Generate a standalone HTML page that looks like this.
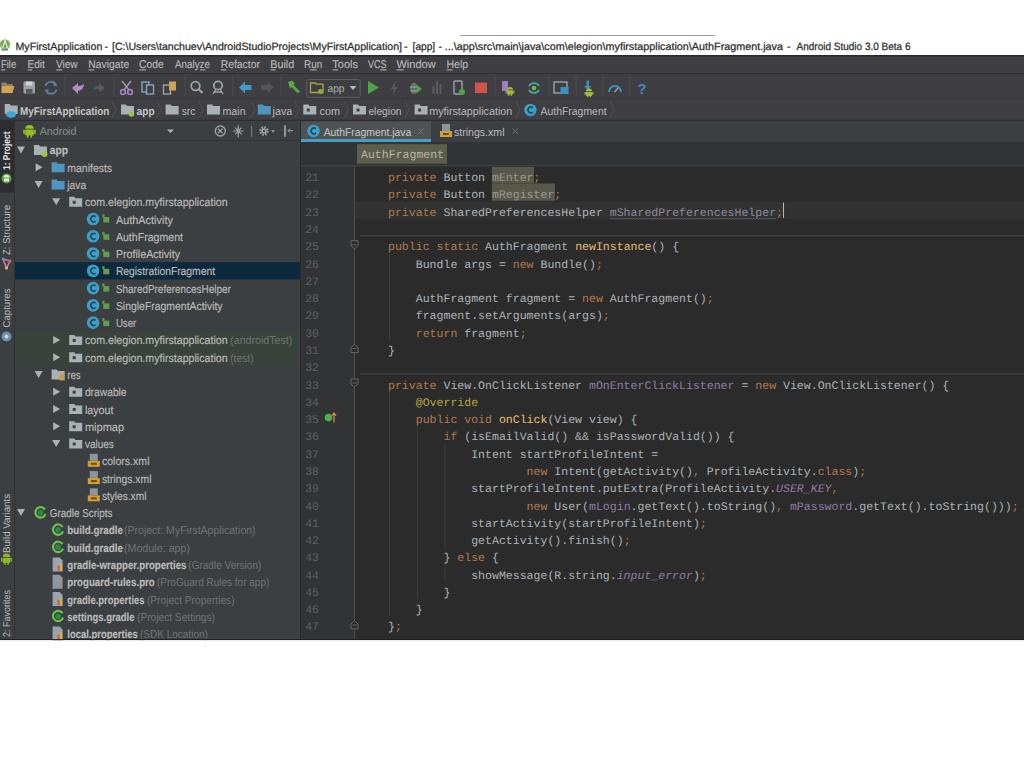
<!DOCTYPE html><html><head><meta charset="utf-8"><style>html,body{margin:0;padding:0;background:#fff;overflow:hidden}svg{display:block}</style></head><body>
<svg width="1024" height="767" viewBox="0 0 1024 767" text-rendering="geometricPrecision">
<rect x="0" y="0" width="1024" height="767" fill="#ffffff" />
<line x1="460" y1="35.5" x2="715" y2="35.5" stroke="#9a9a9a" stroke-width="1" />
<circle cx="5" cy="44.5" r="5.3" fill="#8cba6c"/>
<circle cx="5" cy="44" r="3.6" fill="#6d9e4c"/>
<path d="M2.5 48 L5 40.5 L7.5 48" stroke="#e4f0dc" stroke-width="1.3" fill="none"/>
<rect x="1.5" y="49" width="6.5" height="1.6" fill="#7a8a70"/>
<g stroke="#2e2e2e" stroke-width="0.25">
<text x="15.5" y="49.8" font-family="Liberation Sans" font-size="10.6" font-weight="400" fill="#2e2e2e" textLength="86.8" lengthAdjust="spacingAndGlyphs" >MyFirstApplication</text>
<text x="104.5" y="49.8" font-family="Liberation Sans" font-size="10.6" font-weight="400" fill="#2e2e2e" >-</text>
<text x="112.0" y="49.8" font-family="Liberation Sans" font-size="10.6" font-weight="400" fill="#2e2e2e" textLength="290.0" lengthAdjust="spacingAndGlyphs" >[C:\Users\tanchuev\AndroidStudioProjects\MyFirstApplication]</text>
<text x="404.0" y="49.8" font-family="Liberation Sans" font-size="10.6" font-weight="400" fill="#2e2e2e" >-</text>
<text x="412.6" y="49.8" font-family="Liberation Sans" font-size="10.6" font-weight="400" fill="#2e2e2e" textLength="22.6" lengthAdjust="spacingAndGlyphs" >[app]</text>
<text x="438.6" y="49.8" font-family="Liberation Sans" font-size="10.6" font-weight="400" fill="#2e2e2e" >-</text>
<text x="444.8" y="49.8" font-family="Liberation Sans" font-size="10.6" font-weight="400" fill="#2e2e2e" textLength="338.2" lengthAdjust="spacingAndGlyphs" >...\app\src\main\java\com\elegion\myfirstapplication\AuthFragment.java</text>
<text x="787.0" y="49.8" font-family="Liberation Sans" font-size="10.6" font-weight="400" fill="#2e2e2e" >-</text>
<text x="796.5" y="49.8" font-family="Liberation Sans" font-size="10.6" font-weight="400" fill="#2e2e2e" textLength="114.0" lengthAdjust="spacingAndGlyphs" >Android Studio 3.0 Beta 6</text>
</g>
<rect x="0" y="55" width="1024" height="585" fill="#3c3f41" />
<rect x="0" y="56" width="1024" height="65" fill="#3e3e43" />
<line x1="0" y1="55.7" x2="1024" y2="55.7" stroke="#2a2a2c" stroke-width="1.4" />
<text x="0.9" y="68.4" font-family="Liberation Sans" font-size="11.3" font-weight="400" fill="#bbbbbb" textLength="15.4" lengthAdjust="spacingAndGlyphs" stroke="#bbbbbb" stroke-width="0.12">File</text>
<text x="27.4" y="68.4" font-family="Liberation Sans" font-size="11.3" font-weight="400" fill="#bbbbbb" textLength="17.4" lengthAdjust="spacingAndGlyphs" stroke="#bbbbbb" stroke-width="0.12">Edit</text>
<text x="55.9" y="68.4" font-family="Liberation Sans" font-size="11.3" font-weight="400" fill="#bbbbbb" textLength="21.7" lengthAdjust="spacingAndGlyphs" stroke="#bbbbbb" stroke-width="0.12">View</text>
<text x="88.3" y="68.4" font-family="Liberation Sans" font-size="11.3" font-weight="400" fill="#bbbbbb" textLength="40.9" lengthAdjust="spacingAndGlyphs" stroke="#bbbbbb" stroke-width="0.12">Navigate</text>
<text x="139.1" y="68.4" font-family="Liberation Sans" font-size="11.3" font-weight="400" fill="#bbbbbb" textLength="24.8" lengthAdjust="spacingAndGlyphs" stroke="#bbbbbb" stroke-width="0.12">Code</text>
<text x="175.0" y="68.4" font-family="Liberation Sans" font-size="11.3" font-weight="400" fill="#bbbbbb" textLength="35.0" lengthAdjust="spacingAndGlyphs" stroke="#bbbbbb" stroke-width="0.12">Analyze</text>
<text x="220.7" y="68.4" font-family="Liberation Sans" font-size="11.3" font-weight="400" fill="#bbbbbb" textLength="39.2" lengthAdjust="spacingAndGlyphs" stroke="#bbbbbb" stroke-width="0.12">Refactor</text>
<text x="270.3" y="68.4" font-family="Liberation Sans" font-size="11.3" font-weight="400" fill="#bbbbbb" textLength="23.8" lengthAdjust="spacingAndGlyphs" stroke="#bbbbbb" stroke-width="0.12">Build</text>
<text x="304.1" y="68.4" font-family="Liberation Sans" font-size="11.3" font-weight="400" fill="#bbbbbb" textLength="18.2" lengthAdjust="spacingAndGlyphs" stroke="#bbbbbb" stroke-width="0.12">Run</text>
<text x="332.3" y="68.4" font-family="Liberation Sans" font-size="11.3" font-weight="400" fill="#bbbbbb" textLength="25.6" lengthAdjust="spacingAndGlyphs" stroke="#bbbbbb" stroke-width="0.12">Tools</text>
<text x="367.9" y="68.4" font-family="Liberation Sans" font-size="11.3" font-weight="400" fill="#bbbbbb" textLength="18.5" lengthAdjust="spacingAndGlyphs" stroke="#bbbbbb" stroke-width="0.12">VCS</text>
<text x="396.4" y="68.4" font-family="Liberation Sans" font-size="11.3" font-weight="400" fill="#bbbbbb" textLength="39.3" lengthAdjust="spacingAndGlyphs" stroke="#bbbbbb" stroke-width="0.12">Window</text>
<text x="446.4" y="68.4" font-family="Liberation Sans" font-size="11.3" font-weight="400" fill="#bbbbbb" textLength="21.7" lengthAdjust="spacingAndGlyphs" stroke="#bbbbbb" stroke-width="0.12">Help</text>
<line x1="1.2" y1="69.9" x2="5.2700000000000005" y2="69.9" stroke="#b0b0b0" stroke-width="1.1" />
<line x1="27.7" y1="69.9" x2="32.32" y2="69.9" stroke="#b0b0b0" stroke-width="1.1" />
<line x1="56.2" y1="69.9" x2="62.002500000000005" y2="69.9" stroke="#b0b0b0" stroke-width="1.1" />
<line x1="88.6" y1="69.9" x2="94.14125" y2="69.9" stroke="#b0b0b0" stroke-width="1.1" />
<line x1="139.4" y1="69.9" x2="146.055" y2="69.9" stroke="#b0b0b0" stroke-width="1.1" />
<line x1="199.87142857142857" y1="69.9" x2="205.27714285714285" y2="69.9" stroke="#b0b0b0" stroke-width="1.1" />
<line x1="221.0" y1="69.9" x2="226.3075" y2="69.9" stroke="#b0b0b0" stroke-width="1.1" />
<line x1="270.6" y1="69.9" x2="275.704" y2="69.9" stroke="#b0b0b0" stroke-width="1.1" />
<line x1="310.26666666666665" y1="69.9" x2="316.71999999999997" y2="69.9" stroke="#b0b0b0" stroke-width="1.1" />
<line x1="332.6" y1="69.9" x2="338.1" y2="69.9" stroke="#b0b0b0" stroke-width="1.1" />
<line x1="380.1333333333333" y1="69.9" x2="386.69666666666666" y2="69.9" stroke="#b0b0b0" stroke-width="1.1" />
<line x1="396.7" y1="69.9" x2="403.79499999999996" y2="69.9" stroke="#b0b0b0" stroke-width="1.1" />
<line x1="446.7" y1="69.9" x2="452.5025" y2="69.9" stroke="#b0b0b0" stroke-width="1.1" />
<line x1="0" y1="73.6" x2="1024" y2="73.6" stroke="#323236" stroke-width="1" />
<line x1="65" y1="77" x2="65" y2="96" stroke="#4a4d4f" stroke-width="1" />
<line x1="114" y1="77" x2="114" y2="96" stroke="#4a4d4f" stroke-width="1" />
<line x1="185" y1="77" x2="185" y2="96" stroke="#4a4d4f" stroke-width="1" />
<line x1="232.7" y1="77" x2="232.7" y2="96" stroke="#4a4d4f" stroke-width="1" />
<line x1="281" y1="77" x2="281" y2="96" stroke="#4a4d4f" stroke-width="1" />
<line x1="495" y1="77" x2="495" y2="96" stroke="#4a4d4f" stroke-width="1" />
<line x1="549" y1="77" x2="549" y2="96" stroke="#4a4d4f" stroke-width="1" />
<line x1="576" y1="77" x2="576" y2="96" stroke="#4a4d4f" stroke-width="1" />
<line x1="603" y1="77" x2="603" y2="96" stroke="#4a4d4f" stroke-width="1" />
<line x1="629.8" y1="77" x2="629.8" y2="96" stroke="#4a4d4f" stroke-width="1" />
<line x1="0" y1="98.3" x2="1024" y2="98.3" stroke="#3a3a3f" stroke-width="1" />
<line x1="0" y1="120.3" x2="1024" y2="120.3" stroke="#2e2e31" stroke-width="1.2" />
<rect x="0" y="121" width="14" height="519" fill="#3c3f41" />
<rect x="0" y="121" width="14" height="71.5" fill="#2b2d30" />
<line x1="14.5" y1="121" x2="14.5" y2="640" stroke="#2f3133" stroke-width="1" />
<rect x="15" y="121" width="285" height="519" fill="#3c3f41" />
<line x1="15" y1="140.5" x2="300" y2="140.5" stroke="#323436" stroke-width="1" />
<line x1="300.5" y1="121" x2="300.5" y2="640" stroke="#2b2b2b" stroke-width="1" />
<rect x="301" y="121" width="723" height="22" fill="#3c3f41" />
<rect x="301" y="121.5" width="130" height="21" fill="#4e5254" />
<rect x="301" y="139" width="130" height="3" fill="#4a9cc0" />
<rect x="301" y="142.2" width="723" height="23.8" fill="#313436" />
<line x1="301" y1="166.0" x2="1024" y2="166.0" stroke="#4a4b4d" stroke-width="1.1" />
<rect x="301" y="166.4" width="54" height="473.6" fill="#313335" />
<rect x="355" y="166.4" width="669" height="473.6" fill="#2b2b2b" />
<line x1="354.5" y1="166.4" x2="354.5" y2="640" stroke="#4a4c4e" stroke-width="1" />
<g>
<path d="M17.0 146.435 h8 l-4 7 z" fill="#aeb1b3"/>
<path d="M34.0 144.935 h5 l1.2 1.5 h6.8 v8.5 h-13 z" fill="#a9b1b4"/>
<circle cx="44.5" cy="153.935" r="3" fill="#9cc34e"/>
<text x="49.7" y="154.4" font-family="Liberation Sans" font-size="11.5" font-weight="700" fill="#bbbbbb" textLength="18.4" lengthAdjust="spacingAndGlyphs" stroke="#bbbbbb" stroke-width="0.15">app</text>
<path d="M35.6 163.205 v8 l7 -4 z" fill="#aeb1b3"/>
<path d="M51.6 162.205 h5 l1.2 1.5 h6.8 v8.5 h-13 z" fill="#4e96c0"/>
<text x="67.3" y="171.7" font-family="Liberation Sans" font-size="11.5" font-weight="400" fill="#bbbbbb" textLength="44.8" lengthAdjust="spacingAndGlyphs" stroke="#bbbbbb" stroke-width="0.15">manifests</text>
<path d="M34.6 180.975 h8 l-4 7 z" fill="#aeb1b3"/>
<path d="M51.6 179.475 h5 l1.2 1.5 h6.8 v8.5 h-13 z" fill="#4e96c0"/>
<text x="67.3" y="189.0" font-family="Liberation Sans" font-size="11.5" font-weight="400" fill="#bbbbbb" textLength="18.9" lengthAdjust="spacingAndGlyphs" stroke="#bbbbbb" stroke-width="0.15">java</text>
<path d="M52.2 198.245 h8 l-4 7 z" fill="#aeb1b3"/>
<path d="M69.2 196.745 h5 l1.2 1.5 h6.8 v8.5 h-13 z" fill="#a9b1b4"/>
<rect x="72.7" y="200.745" width="3" height="3" fill="#3c3f41"/>
<text x="84.9" y="206.2" font-family="Liberation Sans" font-size="11.5" font-weight="400" fill="#bbbbbb" textLength="142.8" lengthAdjust="spacingAndGlyphs" stroke="#bbbbbb" stroke-width="0.15">com.elegion.myfirstapplication</text>
<circle cx="93.10000000000001" cy="219.015" r="6.3" fill="#3d9fc5"/>
<path d="M95.60000000000001 216.815 A2.9 2.9 0 1 0 95.60000000000001 221.21499999999997" stroke="#1d4a5e" stroke-width="1.6" fill="none"/>
<rect x="103.30000000000001" y="217.015" width="6" height="5.5" fill="#5f9e4d"/>
<rect x="102.30000000000001" y="214.515" width="2.2" height="3" fill="#5f9e4d"/>
<text x="115.9" y="223.5" font-family="Liberation Sans" font-size="11.5" font-weight="400" fill="#bbbbbb" textLength="57.0" lengthAdjust="spacingAndGlyphs" stroke="#bbbbbb" stroke-width="0.15">AuthActivity</text>
<circle cx="93.10000000000001" cy="236.285" r="6.3" fill="#3d9fc5"/>
<path d="M95.60000000000001 234.085 A2.9 2.9 0 1 0 95.60000000000001 238.48499999999999" stroke="#1d4a5e" stroke-width="1.6" fill="none"/>
<rect x="103.30000000000001" y="234.285" width="6" height="5.5" fill="#5f9e4d"/>
<rect x="102.30000000000001" y="231.785" width="2.2" height="3" fill="#5f9e4d"/>
<text x="115.9" y="240.8" font-family="Liberation Sans" font-size="11.5" font-weight="400" fill="#bbbbbb" textLength="67.1" lengthAdjust="spacingAndGlyphs" stroke="#bbbbbb" stroke-width="0.15">AuthFragment</text>
<circle cx="93.10000000000001" cy="253.555" r="6.3" fill="#3d9fc5"/>
<path d="M95.60000000000001 251.35500000000002 A2.9 2.9 0 1 0 95.60000000000001 255.755" stroke="#1d4a5e" stroke-width="1.6" fill="none"/>
<rect x="103.30000000000001" y="251.555" width="6" height="5.5" fill="#5f9e4d"/>
<rect x="102.30000000000001" y="249.055" width="2.2" height="3" fill="#5f9e4d"/>
<text x="115.9" y="258.1" font-family="Liberation Sans" font-size="11.5" font-weight="400" fill="#bbbbbb" textLength="64.1" lengthAdjust="spacingAndGlyphs" stroke="#bbbbbb" stroke-width="0.15">ProfileActivity</text>
<rect x="15" y="262.19" width="285" height="17.27" fill="#0d293e" />
<circle cx="93.10000000000001" cy="270.825" r="6.3" fill="#3d9fc5"/>
<path d="M95.60000000000001 268.625 A2.9 2.9 0 1 0 95.60000000000001 273.025" stroke="#1d4a5e" stroke-width="1.6" fill="none"/>
<rect x="103.30000000000001" y="268.825" width="6" height="5.5" fill="#5f9e4d"/>
<rect x="102.30000000000001" y="266.325" width="2.2" height="3" fill="#5f9e4d"/>
<text x="115.9" y="275.3" font-family="Liberation Sans" font-size="11.5" font-weight="400" fill="#bbbbbb" textLength="99.1" lengthAdjust="spacingAndGlyphs" stroke="#bbbbbb" stroke-width="0.15">RegistrationFragment</text>
<circle cx="93.10000000000001" cy="288.095" r="6.3" fill="#3d9fc5"/>
<path d="M95.60000000000001 285.89500000000004 A2.9 2.9 0 1 0 95.60000000000001 290.295" stroke="#1d4a5e" stroke-width="1.6" fill="none"/>
<rect x="103.30000000000001" y="286.095" width="6" height="5.5" fill="#5f9e4d"/>
<rect x="102.30000000000001" y="283.595" width="2.2" height="3" fill="#5f9e4d"/>
<text x="115.9" y="292.6" font-family="Liberation Sans" font-size="11.5" font-weight="400" fill="#bbbbbb" textLength="114.9" lengthAdjust="spacingAndGlyphs" stroke="#bbbbbb" stroke-width="0.15">SharedPreferencesHelper</text>
<circle cx="93.10000000000001" cy="305.365" r="6.3" fill="#3d9fc5"/>
<path d="M95.60000000000001 303.165 A2.9 2.9 0 1 0 95.60000000000001 307.565" stroke="#1d4a5e" stroke-width="1.6" fill="none"/>
<rect x="103.30000000000001" y="303.365" width="6" height="5.5" fill="#5f9e4d"/>
<rect x="102.30000000000001" y="300.865" width="2.2" height="3" fill="#5f9e4d"/>
<text x="115.9" y="309.9" font-family="Liberation Sans" font-size="11.5" font-weight="400" fill="#bbbbbb" textLength="106.7" lengthAdjust="spacingAndGlyphs" stroke="#bbbbbb" stroke-width="0.15">SingleFragmentActivity</text>
<circle cx="93.10000000000001" cy="322.635" r="6.3" fill="#3d9fc5"/>
<path d="M95.60000000000001 320.435 A2.9 2.9 0 1 0 95.60000000000001 324.835" stroke="#1d4a5e" stroke-width="1.6" fill="none"/>
<rect x="103.30000000000001" y="320.635" width="6" height="5.5" fill="#5f9e4d"/>
<rect x="102.30000000000001" y="318.135" width="2.2" height="3" fill="#5f9e4d"/>
<text x="115.9" y="327.1" font-family="Liberation Sans" font-size="11.5" font-weight="400" fill="#bbbbbb" textLength="20.4" lengthAdjust="spacingAndGlyphs" stroke="#bbbbbb" stroke-width="0.15">User</text>
<rect x="15" y="331.27" width="285" height="17.27" fill="#3a433b" />
<path d="M53.2 335.905 v8 l7 -4 z" fill="#aeb1b3"/>
<path d="M69.2 334.905 h5 l1.2 1.5 h6.8 v8.5 h-13 z" fill="#a9b1b4"/>
<rect x="72.7" y="338.905" width="3" height="3" fill="#3c3f41"/>
<text x="84.9" y="344.4" font-family="Liberation Sans" font-size="11.5" font-weight="400" fill="#bbbbbb" textLength="142.8" lengthAdjust="spacingAndGlyphs" stroke="#bbbbbb" stroke-width="0.15">com.elegion.myfirstapplication</text>
<text x="230.2" y="344.4" font-family="Liberation Sans" font-size="11.5" font-weight="400" fill="#6f7275" textLength="62.0" lengthAdjust="spacingAndGlyphs" >(androidTest)</text>
<rect x="15" y="348.54" width="285" height="17.27" fill="#3a433b" />
<path d="M53.2 353.175 v8 l7 -4 z" fill="#aeb1b3"/>
<path d="M69.2 352.175 h5 l1.2 1.5 h6.8 v8.5 h-13 z" fill="#a9b1b4"/>
<rect x="72.7" y="356.175" width="3" height="3" fill="#3c3f41"/>
<text x="84.9" y="361.7" font-family="Liberation Sans" font-size="11.5" font-weight="400" fill="#bbbbbb" textLength="142.8" lengthAdjust="spacingAndGlyphs" stroke="#bbbbbb" stroke-width="0.15">com.elegion.myfirstapplication</text>
<text x="230.2" y="361.7" font-family="Liberation Sans" font-size="11.5" font-weight="400" fill="#6f7275" textLength="23.4" lengthAdjust="spacingAndGlyphs" >(test)</text>
<path d="M34.6 370.945 h8 l-4 7 z" fill="#aeb1b3"/>
<path d="M51.6 369.445 h5 l1.2 1.5 h6.8 v8.5 h-13 z" fill="#a9b1b4"/>
<rect x="59.6" y="373.445" width="5" height="7" fill="#c99a4f"/>
<text x="67.3" y="378.9" font-family="Liberation Sans" font-size="11.5" font-weight="400" fill="#bbbbbb" textLength="13.3" lengthAdjust="spacingAndGlyphs" stroke="#bbbbbb" stroke-width="0.15">res</text>
<path d="M53.2 387.71500000000003 v8 l7 -4 z" fill="#aeb1b3"/>
<path d="M69.2 386.71500000000003 h5 l1.2 1.5 h6.8 v8.5 h-13 z" fill="#a9b1b4"/>
<rect x="72.7" y="390.71500000000003" width="3" height="3" fill="#3c3f41"/>
<text x="84.9" y="396.2" font-family="Liberation Sans" font-size="11.5" font-weight="400" fill="#bbbbbb" textLength="41.7" lengthAdjust="spacingAndGlyphs" stroke="#bbbbbb" stroke-width="0.15">drawable</text>
<path d="M53.2 404.985 v8 l7 -4 z" fill="#aeb1b3"/>
<path d="M69.2 403.985 h5 l1.2 1.5 h6.8 v8.5 h-13 z" fill="#a9b1b4"/>
<rect x="72.7" y="407.985" width="3" height="3" fill="#3c3f41"/>
<text x="84.9" y="413.5" font-family="Liberation Sans" font-size="11.5" font-weight="400" fill="#bbbbbb" textLength="28.5" lengthAdjust="spacingAndGlyphs" stroke="#bbbbbb" stroke-width="0.15">layout</text>
<path d="M53.2 422.255 v8 l7 -4 z" fill="#aeb1b3"/>
<path d="M69.2 421.255 h5 l1.2 1.5 h6.8 v8.5 h-13 z" fill="#a9b1b4"/>
<rect x="72.7" y="425.255" width="3" height="3" fill="#3c3f41"/>
<text x="84.9" y="430.8" font-family="Liberation Sans" font-size="11.5" font-weight="400" fill="#bbbbbb" textLength="39.2" lengthAdjust="spacingAndGlyphs" stroke="#bbbbbb" stroke-width="0.15">mipmap</text>
<path d="M52.2 440.025 h8 l-4 7 z" fill="#aeb1b3"/>
<path d="M69.2 438.525 h5 l1.2 1.5 h6.8 v8.5 h-13 z" fill="#a9b1b4"/>
<rect x="72.7" y="442.525" width="3" height="3" fill="#3c3f41"/>
<text x="84.9" y="448.0" font-family="Liberation Sans" font-size="11.5" font-weight="400" fill="#bbbbbb" textLength="29.0" lengthAdjust="spacingAndGlyphs" stroke="#bbbbbb" stroke-width="0.15">values</text>
<rect x="89.80000000000001" y="453.795" width="8" height="7" fill="#8a95a0"/>
<rect x="87.80000000000001" y="460.795" width="12" height="6" fill="#d29f34"/>
<rect x="90.80000000000001" y="462.795" width="6" height="2" fill="#6b4e1a"/>
<text x="101.9" y="465.3" font-family="Liberation Sans" font-size="11.5" font-weight="400" fill="#bbbbbb" textLength="47.6" lengthAdjust="spacingAndGlyphs" stroke="#bbbbbb" stroke-width="0.15">colors.xml</text>
<rect x="89.80000000000001" y="471.065" width="8" height="7" fill="#8a95a0"/>
<rect x="87.80000000000001" y="478.065" width="12" height="6" fill="#d29f34"/>
<rect x="90.80000000000001" y="480.065" width="6" height="2" fill="#6b4e1a"/>
<text x="101.9" y="482.6" font-family="Liberation Sans" font-size="11.5" font-weight="400" fill="#bbbbbb" textLength="49.6" lengthAdjust="spacingAndGlyphs" stroke="#bbbbbb" stroke-width="0.15">strings.xml</text>
<rect x="89.80000000000001" y="488.335" width="8" height="7" fill="#8a95a0"/>
<rect x="87.80000000000001" y="495.335" width="12" height="6" fill="#d29f34"/>
<rect x="90.80000000000001" y="497.335" width="6" height="2" fill="#6b4e1a"/>
<text x="101.9" y="499.8" font-family="Liberation Sans" font-size="11.5" font-weight="400" fill="#bbbbbb" textLength="44.5" lengthAdjust="spacingAndGlyphs" stroke="#bbbbbb" stroke-width="0.15">styles.xml</text>
<path d="M17.0 509.105 h8 l-4 7 z" fill="#aeb1b3"/>
<path d="M45.0 509.605 A5.2 5.2 0 1 0 45.5 514.105" stroke="#6cc04c" stroke-width="2.2" fill="none"/>
<circle cx="40.5" cy="512.605" r="2.8" fill="#2f8a45"/>
<text x="49.7" y="517.1" font-family="Liberation Sans" font-size="11.5" font-weight="400" fill="#bbbbbb" textLength="62.8" lengthAdjust="spacingAndGlyphs" stroke="#bbbbbb" stroke-width="0.15">Gradle Scripts</text>
<path d="M62.6 526.875 A5.2 5.2 0 1 0 63.1 531.375" stroke="#6cc04c" stroke-width="2.2" fill="none"/>
<circle cx="58.1" cy="529.875" r="2.8" fill="#2f8a45"/>
<text x="67.3" y="534.4" font-family="Liberation Sans" font-size="11.5" font-weight="700" fill="#bbbbbb" textLength="55.7" lengthAdjust="spacingAndGlyphs" stroke="#bbbbbb" stroke-width="0.15">build.gradle</text>
<text x="124.0" y="534.4" font-family="Liberation Sans" font-size="11.5" font-weight="400" fill="#6f7275" textLength="131.6" lengthAdjust="spacingAndGlyphs" >(Project: MyFirstApplication)</text>
<path d="M62.6 544.145 A5.2 5.2 0 1 0 63.1 548.645" stroke="#6cc04c" stroke-width="2.2" fill="none"/>
<circle cx="58.1" cy="547.145" r="2.8" fill="#2f8a45"/>
<text x="67.3" y="551.6" font-family="Liberation Sans" font-size="11.5" font-weight="700" fill="#bbbbbb" textLength="55.7" lengthAdjust="spacingAndGlyphs" stroke="#bbbbbb" stroke-width="0.15">build.gradle</text>
<text x="124.0" y="551.6" font-family="Liberation Sans" font-size="11.5" font-weight="400" fill="#6f7275" textLength="66.1" lengthAdjust="spacingAndGlyphs" >(Module: app)</text>
<path d="M52.6 557.415 h7 l3 3 v11 h-10 z" fill="#9aa4ad"/>
<rect x="57.6" y="565.415" width="2" height="5" fill="#d05a2c"/>
<rect x="60.1" y="563.415" width="2" height="7" fill="#e3b13b"/>
<text x="67.3" y="568.9" font-family="Liberation Sans" font-size="11.5" font-weight="700" fill="#bbbbbb" textLength="119.2" lengthAdjust="spacingAndGlyphs" stroke="#bbbbbb" stroke-width="0.15">gradle-wrapper.properties</text>
<text x="188.3" y="568.9" font-family="Liberation Sans" font-size="11.5" font-weight="400" fill="#6f7275" textLength="73.0" lengthAdjust="spacingAndGlyphs" >(Gradle Version)</text>
<path d="M52.6 574.685 h7 l3 3 v11 h-10 z" fill="#8e979e"/>
<text x="67.3" y="586.2" font-family="Liberation Sans" font-size="11.5" font-weight="700" fill="#bbbbbb" textLength="87.5" lengthAdjust="spacingAndGlyphs" stroke="#bbbbbb" stroke-width="0.15">proguard-rules.pro</text>
<text x="157.0" y="586.2" font-family="Liberation Sans" font-size="11.5" font-weight="400" fill="#6f7275" textLength="112.3" lengthAdjust="spacingAndGlyphs" >(ProGuard Rules for app)</text>
<path d="M52.6 591.9549999999999 h7 l3 3 v11 h-10 z" fill="#9aa4ad"/>
<rect x="57.6" y="599.9549999999999" width="2" height="5" fill="#d05a2c"/>
<rect x="60.1" y="597.9549999999999" width="2" height="7" fill="#e3b13b"/>
<text x="67.3" y="603.5" font-family="Liberation Sans" font-size="11.5" font-weight="700" fill="#bbbbbb" textLength="77.3" lengthAdjust="spacingAndGlyphs" stroke="#bbbbbb" stroke-width="0.15">gradle.properties</text>
<text x="146.9" y="603.5" font-family="Liberation Sans" font-size="11.5" font-weight="400" fill="#6f7275" textLength="87.7" lengthAdjust="spacingAndGlyphs" >(Project Properties)</text>
<path d="M62.6 613.2249999999999 A5.2 5.2 0 1 0 63.1 617.7249999999999" stroke="#6cc04c" stroke-width="2.2" fill="none"/>
<circle cx="58.1" cy="616.2249999999999" r="2.8" fill="#2f8a45"/>
<text x="67.3" y="620.7" font-family="Liberation Sans" font-size="11.5" font-weight="700" fill="#bbbbbb" textLength="67.2" lengthAdjust="spacingAndGlyphs" stroke="#bbbbbb" stroke-width="0.15">settings.gradle</text>
<text x="137.0" y="620.7" font-family="Liberation Sans" font-size="11.5" font-weight="400" fill="#6f7275" textLength="78.0" lengthAdjust="spacingAndGlyphs" >(Project Settings)</text>
<path d="M52.6 626.495 h7 l3 3 v11 h-10 z" fill="#9aa4ad"/>
<rect x="57.6" y="634.495" width="2" height="5" fill="#d05a2c"/>
<rect x="60.1" y="632.495" width="2" height="7" fill="#e3b13b"/>
<text x="67.3" y="638.0" font-family="Liberation Sans" font-size="11.5" font-weight="700" fill="#bbbbbb" textLength="70.5" lengthAdjust="spacingAndGlyphs" stroke="#bbbbbb" stroke-width="0.15">local.properties</text>
<text x="140.0" y="638.0" font-family="Liberation Sans" font-size="11.5" font-weight="400" fill="#6f7275" textLength="67.9" lengthAdjust="spacingAndGlyphs" >(SDK Location)</text>
</g>
<g transform="translate(29.5 130) scale(0.85)"><path d="M-5 -1.5 A5 4.5 0 0 1 5 -1.5 Z" fill="#97c024"/><rect x="-5" y="-0.5" width="10" height="7" rx="1" fill="#97c024"/><rect x="-7.3" y="-0.5" width="1.8" height="5.5" rx="0.9" fill="#97c024"/><rect x="5.5" y="-0.5" width="1.8" height="5.5" rx="0.9" fill="#97c024"/><rect x="-3" y="6" width="1.8" height="3" fill="#97c024"/><rect x="1.2" y="6" width="1.8" height="3" fill="#97c024"/></g>
<text x="39.8" y="134.8" font-family="Liberation Sans" font-size="11.4" font-weight="400" fill="#8d9092" textLength="36.5" lengthAdjust="spacingAndGlyphs" >Android</text>
<path d="M167 129.5 h7 l-3.5 3.5 z" fill="#b0b3b5"/>
<g transform="translate(0 0.7)" opacity="0.9">
<circle cx="220.3" cy="130.3" r="5" stroke="#a8abad" stroke-width="1.4" fill="none"/>
<path d="M218 128 l4.6 4.6 M222.6 128 l-4.6 4.6" stroke="#a8abad" stroke-width="1.3"/>
<path d="M238.3 124.5 v12 M233 130.3 h10.6 M235 127 l3.3 3.3 l3.3 -3.3 M235 133.6 l3.3 -3.3 l3.3 3.3" stroke="#a8abad" stroke-width="1.2" fill="none"/>
<line x1="251.6" y1="125" x2="251.6" y2="136" stroke="#7d8082" stroke-width="1.2" />
<circle cx="264" cy="130.3" r="3.6" stroke="#a8abad" stroke-width="2.4" fill="none" stroke-dasharray="1.6 1.2"/>
<circle cx="264" cy="130.3" r="2.6" fill="#a8abad"/>
<circle cx="264" cy="130.3" r="1.1" fill="#3c3f41"/>
<path d="M271 129.5 h4 l-2 2.5 z" fill="#a8abad"/>
<line x1="285" y1="124.5" x2="285" y2="136" stroke="#a8abad" stroke-width="1.8" />
<path d="M288 130 h5 M290 128 l-2 2 l2 2" stroke="#a8abad" stroke-width="1" fill="none"/>
</g>
<text transform="translate(9.9 170) rotate(-90)" x="0" y="0" font-family="Liberation Sans" font-size="10" font-weight="700" fill="#e2e2e2" textLength="38.5" lengthAdjust="spacingAndGlyphs">1: Project</text>
<circle cx="6.5" cy="178.5" r="5" fill="#5a9d48"/>
<path d="M3.5 177.5 A3 2.7 0 0 1 9.5 177.5 Z M4 178.5 h5 v3 h-5 z" fill="#d9ecd0"/>
<text transform="translate(10.2 255) rotate(-90)" x="0" y="0" font-family="Liberation Sans" font-size="10" font-weight="400" fill="#bbbbbb" textLength="50" lengthAdjust="spacingAndGlyphs">Z: Structure</text>
<path d="M3 259 L10 261 L6.5 268 Z" fill="none" stroke="#c77aa0" stroke-width="1.6"/>
<circle cx="3.2" cy="259" r="1.6" fill="#5b8bd6"/><circle cx="10" cy="261" r="1.6" fill="#d65b6e"/><circle cx="6.5" cy="268" r="1.6" fill="#c8c05a"/>
<text transform="translate(10.2 327.5) rotate(-90)" x="0" y="0" font-family="Liberation Sans" font-size="10" font-weight="400" fill="#bbbbbb" textLength="39" lengthAdjust="spacingAndGlyphs">Captures</text>
<circle cx="6.5" cy="336.5" r="5" fill="#6a8fb0"/><circle cx="6.5" cy="336.5" r="2" fill="#c8d8e8"/>
<text transform="translate(10.2 553) rotate(-90)" x="0" y="0" font-family="Liberation Sans" font-size="10" font-weight="400" fill="#bbbbbb" textLength="59" lengthAdjust="spacingAndGlyphs">Build Variants</text>
<g transform="translate(6.5 558) scale(0.75)"><path d="M-5 -1.5 A5 4.5 0 0 1 5 -1.5 Z" fill="#8cb82a"/><rect x="-5" y="-0.5" width="10" height="7" rx="1" fill="#8cb82a"/><rect x="-7.3" y="-0.5" width="1.8" height="5.5" rx="0.9" fill="#8cb82a"/><rect x="5.5" y="-0.5" width="1.8" height="5.5" rx="0.9" fill="#8cb82a"/><rect x="-3" y="6" width="1.8" height="3" fill="#8cb82a"/><rect x="1.2" y="6" width="1.8" height="3" fill="#8cb82a"/></g>
<text transform="translate(10.2 637) rotate(-90)" x="0" y="0" font-family="Liberation Sans" font-size="10" font-weight="400" fill="#bbbbbb" textLength="47" lengthAdjust="spacingAndGlyphs">2: Favorites</text>
<path d="M4.7 104 h5 l1.2 1.5 h6.8 v8.5 h-13 z" fill="#a9b1b4"/>
<ellipse cx="11" cy="114.5" rx="5" ry="3.2" fill="#3ea6d6"/>
<text x="20.0" y="115.1" font-family="Liberation Sans" font-size="11.4" font-weight="700" fill="#c5c5c5" textLength="89.4" lengthAdjust="spacingAndGlyphs" >MyFirstApplication</text>
<path d="M112 101.5 L116.2 109.5 L112 117.5" stroke="#55565b" stroke-width="0.8" fill="none"/>
<path d="M121 104.5 h5 l1.2 1.5 h6.8 v8.5 h-13 z" fill="#a9b1b4"/><circle cx="131.5" cy="114" r="2.8" fill="#9cc34e"/>
<text x="136.6" y="115.1" font-family="Liberation Sans" font-size="11.4" font-weight="700" fill="#c5c5c5" textLength="18.1" lengthAdjust="spacingAndGlyphs" >app</text>
<path d="M157 101.5 L161.2 109.5 L157 117.5" stroke="#55565b" stroke-width="0.8" fill="none"/>
<path d="M165.6 104.5 h5 l1.2 1.5 h6.8 v8.5 h-13 z" fill="#a9b1b4"/>
<text x="181.7" y="115.1" font-family="Liberation Sans" font-size="11.4" font-weight="400" fill="#bbbbbb" textLength="13.6" lengthAdjust="spacingAndGlyphs" >src</text>
<path d="M199 101.5 L203.2 109.5 L199 117.5" stroke="#55565b" stroke-width="0.8" fill="none"/>
<path d="M207 104.5 h5 l1.2 1.5 h6.8 v8.5 h-13 z" fill="#a9b1b4"/>
<text x="222.5" y="115.1" font-family="Liberation Sans" font-size="11.4" font-weight="400" fill="#bbbbbb" textLength="23.1" lengthAdjust="spacingAndGlyphs" >main</text>
<path d="M251 101.5 L255.2 109.5 L251 117.5" stroke="#55565b" stroke-width="0.8" fill="none"/>
<path d="M257.8 104.5 h5 l1.2 1.5 h6.8 v8.5 h-13 z" fill="#4e96c0"/>
<text x="272.5" y="115.1" font-family="Liberation Sans" font-size="11.4" font-weight="400" fill="#bbbbbb" textLength="19.8" lengthAdjust="spacingAndGlyphs" >java</text>
<path d="M295 101.5 L299.2 109.5 L295 117.5" stroke="#55565b" stroke-width="0.8" fill="none"/>
<path d="M303.3 104.5 h5 l1.2 1.5 h6.8 v8.5 h-13 z" fill="#a9b1b4"/>
<rect x="306.8" y="108.5" width="3" height="3" fill="#3c3f41"/>
<text x="319.6" y="115.1" font-family="Liberation Sans" font-size="11.4" font-weight="400" fill="#bbbbbb" textLength="20.5" lengthAdjust="spacingAndGlyphs" >com</text>
<path d="M344.5 101.5 L348.7 109.5 L344.5 117.5" stroke="#55565b" stroke-width="0.8" fill="none"/>
<path d="M353 104.5 h5 l1.2 1.5 h6.8 v8.5 h-13 z" fill="#a9b1b4"/>
<rect x="356.5" y="108.5" width="3" height="3" fill="#3c3f41"/>
<text x="368.4" y="115.1" font-family="Liberation Sans" font-size="11.4" font-weight="400" fill="#bbbbbb" textLength="33.2" lengthAdjust="spacingAndGlyphs" >elegion</text>
<path d="M405 101.5 L409.2 109.5 L405 117.5" stroke="#55565b" stroke-width="0.8" fill="none"/>
<path d="M414.6 104.5 h5 l1.2 1.5 h6.8 v8.5 h-13 z" fill="#a9b1b4"/>
<rect x="418.1" y="108.5" width="3" height="3" fill="#3c3f41"/>
<text x="429.2" y="115.1" font-family="Liberation Sans" font-size="11.4" font-weight="400" fill="#bbbbbb" textLength="83.1" lengthAdjust="spacingAndGlyphs" >myfirstapplication</text>
<path d="M516 101.5 L520.2 109.5 L516 117.5" stroke="#55565b" stroke-width="0.8" fill="none"/>
<circle cx="530.4" cy="110" r="6.2" fill="#3d9fc5"/><path d="M532.8 107.8 A2.9 2.9 0 1 0 532.8 112.2" stroke="#1d4a5e" stroke-width="1.6" fill="none"/>
<text x="540.5" y="115.1" font-family="Liberation Sans" font-size="11.4" font-weight="400" fill="#bbbbbb" textLength="66.1" lengthAdjust="spacingAndGlyphs" >AuthFragment</text>
<path d="M610 101.5 L614.2 109.5 L610 117.5" stroke="#55565b" stroke-width="0.8" fill="none"/>
<circle cx="313.5" cy="131" r="6.2" fill="#3d9fc5"/><path d="M315.9 128.8 A2.9 2.9 0 1 0 315.9 133.2" stroke="#1d4a5e" stroke-width="1.6" fill="none"/>
<text x="323.7" y="136.0" font-family="Liberation Sans" font-size="11.4" font-weight="400" fill="#c8c8c8" textLength="87.6" lengthAdjust="spacingAndGlyphs" >AuthFragment.java</text>
<path d="M418 128.5 l5.5 5.5 M423.5 128.5 l-5.5 5.5" stroke="#6e7173" stroke-width="1"/>
<rect x="442" y="124" width="8" height="7" fill="#8a95a0"/>
<rect x="440" y="131" width="12" height="6" fill="#d29f34"/>
<rect x="443" y="133" width="6" height="2" fill="#6b4e1a"/>
<text x="454.0" y="136.0" font-family="Liberation Sans" font-size="11.4" font-weight="400" fill="#bbbbbb" textLength="50.5" lengthAdjust="spacingAndGlyphs" >strings.xml</text>
<path d="M512.5 128.5 l5.5 5.5 M518 128.5 l-5.5 5.5" stroke="#6e7173" stroke-width="1"/>
<path d="M351.0 240.76 h7 v5 l-3.5 3 l-3.5 -3 z" fill="#2b2b2b" stroke="#6a6d70" stroke-width="0.9"/>
<line x1="352.5" y1="244.76" x2="356.5" y2="244.76" stroke="#6a6d70" stroke-width="0.9" />
<path d="M351.0 352.44 h7 v-5 l-3.5 -3 l-3.5 3 z" fill="#2b2b2b" stroke="#6a6d70" stroke-width="0.9"/>
<line x1="352.5" y1="348.44" x2="356.5" y2="348.44" stroke="#6a6d70" stroke-width="0.9" />
<path d="M351.0 379.0 h7 v5 l-3.5 3 l-3.5 -3 z" fill="#2b2b2b" stroke="#6a6d70" stroke-width="0.9"/>
<line x1="352.5" y1="383.0" x2="356.5" y2="383.0" stroke="#6a6d70" stroke-width="0.9" />
<path d="M351.0 628.92 h7 v-5 l-3.5 -3 l-3.5 3 z" fill="#2b2b2b" stroke="#6a6d70" stroke-width="0.9"/>
<line x1="352.5" y1="624.92" x2="356.5" y2="624.92" stroke="#6a6d70" stroke-width="0.9" />
<circle cx="328.5" cy="417.6" r="3.8" fill="#4cae4c"/>
<path d="M334 422.6 v-9 M332 415.6 l2 -2.5 l2 2.5" stroke="#e0833a" stroke-width="1.3" fill="none"/>
<g opacity="0.88">
<path d="M1.5 82.5 h4.5 l1.2 1.5 h5.5 v2 h-11.2 z" fill="#9a8a6a"/>
<path d="M1.5 86 h13 l-2 7 h-11 z" fill="#e2b457"/>
<rect x="23.5" y="81.5" width="11.5" height="12" rx="1" fill="#a9b1b4"/>
<rect x="26" y="81.5" width="6.5" height="4" fill="#e8e8e8"/><rect x="26" y="89" width="6.5" height="4.5" fill="#5a5d5f"/>
<path d="M45.5 86 A5.6 5.6 0 0 1 56 85" stroke="#5e8aa3" stroke-width="1.8" fill="none"/><path d="M56.5 89.5 A5.6 5.6 0 0 1 46 90.5" stroke="#5e8aa3" stroke-width="1.8" fill="none"/>
<path d="M54 82.5 l3.5 3 l-4 1 z M48 93 l-3.5 -3 l4 -1 z" fill="#5e8aa3"/>
<path d="M72 88 l6 -5 v3 q5 0 6 -3 q0 7 -6 8 v3 z" fill="#b99bd9"/>
<path d="M105 88 l-6 -5 v3 q-5 0 -6 4 q1 -1 6 -1 v3 z" fill="#5d6163"/>
<path d="M122 81 l7 9 M131 81 l-7 9" stroke="#a8abad" stroke-width="1.4"/>
<circle cx="123" cy="92" r="2.4" stroke="#b08ad0" stroke-width="1.6" fill="none"/><circle cx="130" cy="92" r="2.4" stroke="#b08ad0" stroke-width="1.6" fill="none"/>
<rect x="142" y="82" width="7" height="10" fill="none" stroke="#8fb4d0" stroke-width="1.4"/><rect x="146.5" y="85" width="7" height="9" fill="#3c3f41" stroke="#8fb4d0" stroke-width="1.4"/>
<rect x="163.5" y="85" width="7" height="9" fill="none" stroke="#a9b1b4" stroke-width="1.4"/><rect x="169" y="81.5" width="7" height="9" fill="#e2b457"/>
<circle cx="195.5" cy="86" r="4.3" stroke="#a9b1b4" stroke-width="1.8" fill="none"/><path d="M198.5 89 l4 4" stroke="#a9b1b4" stroke-width="2.2"/>
<circle cx="218" cy="85.5" r="4.2" stroke="#a9b1b4" stroke-width="1.8" fill="none"/><path d="M213 94 l3 -5 M223 94 l-3 -5 M214.5 92 h7" stroke="#a9b1b4" stroke-width="1.4"/>
<path d="M239 87.5 l6 -6 v3.5 h6.5 v5 h-6.5 v3.5 z" fill="#40a8e0"/>
<path d="M273.5 87.5 l-6 -6 v3.5 h-6.5 v5 h6.5 v3.5 z" fill="#55595b"/>
<path d="M288 82 l4 -1.5 l3 3 l-1.5 1.5 l6.5 6.5 l-2 2 l-6.5 -6.5 l-1.5 1.5 z" fill="#62b543"/>
<rect x="306.8" y="79.5" width="53.4" height="17.8" rx="1.5" fill="#3c3f41" stroke="#5e6163" stroke-width="1"/>
<path d="M310.5 83 h5 l1 1.2 h6.5 v8.3 h-12.5 z" fill="none" stroke="#c9b04a" stroke-width="1.3"/><circle cx="320.5" cy="91.5" r="2.5" fill="#8fbf3a"/>
<text x="327.5" y="92.0" font-family="Liberation Sans" font-size="10.8" font-weight="400" fill="#c0c0c0" textLength="17.0" lengthAdjust="spacingAndGlyphs" >app</text>
<path d="M349.5 86 h7 l-3.5 4 z" fill="#c8c8c8"/>
<path d="M368 81 v13 l11 -6.5 z" fill="#4fb34a"/>
<path d="M396 81 l-5 8 h3 l-1.5 6 l5 -8 h-3 z" fill="#5d6163"/>
<ellipse cx="414" cy="88.5" rx="4" ry="5.5" fill="#8a9a8c"/><path d="M409 85 h10 M409 89 h10 M409.5 93 h9" stroke="#3c3f41" stroke-width="0.8"/><path d="M417 85 v8 l5 -4 z" fill="#4fb34a"/>
<rect x="432.5" y="86" width="2" height="8" fill="#5d6163"/><rect x="436" y="81" width="2" height="13" fill="#5d6163"/><rect x="439.5" y="84" width="2" height="10" fill="#5d6163"/>
<rect x="454" y="81" width="8" height="13" rx="1" fill="none" stroke="#a9b1b4" stroke-width="1.4"/><circle cx="462" cy="92" r="3" fill="#4fb34a"/>
<rect x="475" y="82.5" width="12" height="10.5" fill="#e05a4a"/>
<rect x="502" y="81" width="6" height="10" fill="#a98ac8"/>
<g transform="translate(510 90.5) scale(0.6)"><path d="M-5 -1.5 A5 4.5 0 0 1 5 -1.5 Z" fill="#b5cc3a"/><rect x="-5" y="-0.5" width="10" height="7" rx="1" fill="#b5cc3a"/><rect x="-7.3" y="-0.5" width="1.8" height="5.5" rx="0.9" fill="#b5cc3a"/><rect x="5.5" y="-0.5" width="1.8" height="5.5" rx="0.9" fill="#b5cc3a"/><rect x="-3" y="6" width="1.8" height="3" fill="#b5cc3a"/><rect x="1.2" y="6" width="1.8" height="3" fill="#b5cc3a"/></g>
<path d="M529 86 A5.5 5 0 0 1 539 86" stroke="#44b5a8" stroke-width="1.8" fill="none"/><path d="M539 90 A5.5 5 0 0 1 529 90" stroke="#44b5a8" stroke-width="1.8" fill="none"/><circle cx="534" cy="88" r="2.3" fill="#7ac943"/>
<rect x="554" y="82" width="13" height="11" fill="none" stroke="#a9b1b4" stroke-width="1.4"/><rect x="560.5" y="87" width="8" height="7" fill="#3a9fd0"/>
<rect x="586.5" y="80.5" width="2.5" height="6" fill="#3a9fd0"/><path d="M584 86 h7.5 l-3.75 4 z" fill="#3a9fd0"/>
<g transform="translate(589 92) scale(0.6)"><path d="M-5 -1.5 A5 4.5 0 0 1 5 -1.5 Z" fill="#b5cc3a"/><rect x="-5" y="-0.5" width="10" height="7" rx="1" fill="#b5cc3a"/><rect x="-7.3" y="-0.5" width="1.8" height="5.5" rx="0.9" fill="#b5cc3a"/><rect x="5.5" y="-0.5" width="1.8" height="5.5" rx="0.9" fill="#b5cc3a"/><rect x="-3" y="6" width="1.8" height="3" fill="#b5cc3a"/><rect x="1.2" y="6" width="1.8" height="3" fill="#b5cc3a"/></g>
<path d="M609 92 A6 6 0 0 1 621 92" stroke="#3a9fd0" stroke-width="2" fill="none"/><path d="M614.5 92 l3.5 -4" stroke="#a9b1b4" stroke-width="1.4"/>
<text x="637.5" y="94.0" font-family="Liberation Sans" font-size="14.5" font-weight="700" fill="#3a9fd0" >?</text>
</g>
<rect x="355" y="201.56" width="669" height="17.28" fill="#323232" />
<line x1="360" y1="235.62" x2="1024" y2="235.62" stroke="#46484a" stroke-width="1" />
<line x1="360" y1="373.86" x2="1024" y2="373.86" stroke="#46484a" stroke-width="1" />
<rect x="491.9" y="167.0" width="42.1" height="16.48" fill="#57584a" />
<rect x="491.9" y="183.48" width="63.1" height="17.28" fill="#57584a" />
<line x1="389.52" y1="253.4" x2="389.52" y2="339.8" stroke="#3b3b3b" stroke-width="1" />
<line x1="389.52" y1="391.64" x2="389.52" y2="616.28" stroke="#3b3b3b" stroke-width="1" />
<line x1="417.24" y1="426.20000000000005" x2="417.24" y2="599.0" stroke="#3b3b3b" stroke-width="1" />
<line x1="444.96000000000004" y1="443.48" x2="444.96000000000004" y2="547.1600000000001" stroke="#3b3b3b" stroke-width="1" />
<line x1="444.96000000000004" y1="564.44" x2="444.96000000000004" y2="581.72" stroke="#3b3b3b" stroke-width="1" />
<text x="319" y="181.20" font-family="Liberation Mono" font-size="11.550" fill="#5c5f62" text-anchor="end">21</text>
<text x="360.3" y="181.20" font-family="Liberation Mono" font-size="11.550" xml:space="preserve"><tspan fill="#adb3b9">    </tspan><tspan fill="#b27a4a">private </tspan><tspan fill="#adb3b9">Button </tspan><tspan fill="#9b978f">mEnter</tspan><tspan fill="#b27a4a">;</tspan></text>
<text x="319" y="198.48" font-family="Liberation Mono" font-size="11.550" fill="#5c5f62" text-anchor="end">22</text>
<text x="360.3" y="198.48" font-family="Liberation Mono" font-size="11.550" xml:space="preserve"><tspan fill="#adb3b9">    </tspan><tspan fill="#b27a4a">private </tspan><tspan fill="#adb3b9">Button </tspan><tspan fill="#9b978f">mRegister</tspan><tspan fill="#b27a4a">;</tspan></text>
<text x="319" y="215.76" font-family="Liberation Mono" font-size="11.550" fill="#5c5f62" text-anchor="end">23</text>
<text x="360.3" y="215.76" font-family="Liberation Mono" font-size="11.550" xml:space="preserve"><tspan fill="#adb3b9">    </tspan><tspan fill="#b27a4a">private </tspan><tspan fill="#adb3b9">SharedPreferencesHelper </tspan><tspan fill="#8f88a0">mSharedPreferencesHelper</tspan><tspan fill="#b27a4a">;</tspan></text>
<text x="319" y="233.04" font-family="Liberation Mono" font-size="11.550" fill="#5c5f62" text-anchor="end">24</text>
<text x="319" y="250.32" font-family="Liberation Mono" font-size="11.550" fill="#5c5f62" text-anchor="end">25</text>
<text x="360.3" y="250.32" font-family="Liberation Mono" font-size="11.550" xml:space="preserve"><tspan fill="#adb3b9">    </tspan><tspan fill="#b27a4a">public static </tspan><tspan fill="#adb3b9">AuthFragment </tspan><tspan fill="#e9bd6c">newInstance</tspan><tspan fill="#adb3b9">() {</tspan></text>
<text x="319" y="267.60" font-family="Liberation Mono" font-size="11.550" fill="#5c5f62" text-anchor="end">26</text>
<text x="360.3" y="267.60" font-family="Liberation Mono" font-size="11.550" xml:space="preserve"><tspan fill="#adb3b9">        </tspan><tspan fill="#adb3b9">Bundle args = </tspan><tspan fill="#b27a4a">new </tspan><tspan fill="#adb3b9">Bundle()</tspan><tspan fill="#b27a4a">;</tspan></text>
<text x="319" y="284.88" font-family="Liberation Mono" font-size="11.550" fill="#5c5f62" text-anchor="end">27</text>
<text x="319" y="302.16" font-family="Liberation Mono" font-size="11.550" fill="#5c5f62" text-anchor="end">28</text>
<text x="360.3" y="302.16" font-family="Liberation Mono" font-size="11.550" xml:space="preserve"><tspan fill="#adb3b9">        </tspan><tspan fill="#adb3b9">AuthFragment fragment = </tspan><tspan fill="#b27a4a">new </tspan><tspan fill="#adb3b9">AuthFragment()</tspan><tspan fill="#b27a4a">;</tspan></text>
<text x="319" y="319.44" font-family="Liberation Mono" font-size="11.550" fill="#5c5f62" text-anchor="end">29</text>
<text x="360.3" y="319.44" font-family="Liberation Mono" font-size="11.550" xml:space="preserve"><tspan fill="#adb3b9">        </tspan><tspan fill="#adb3b9">fragment.setArguments(args)</tspan><tspan fill="#b27a4a">;</tspan></text>
<text x="319" y="336.72" font-family="Liberation Mono" font-size="11.550" fill="#5c5f62" text-anchor="end">30</text>
<text x="360.3" y="336.72" font-family="Liberation Mono" font-size="11.550" xml:space="preserve"><tspan fill="#adb3b9">        </tspan><tspan fill="#b27a4a">return </tspan><tspan fill="#adb3b9">fragment</tspan><tspan fill="#b27a4a">;</tspan></text>
<text x="319" y="354.00" font-family="Liberation Mono" font-size="11.550" fill="#5c5f62" text-anchor="end">31</text>
<text x="360.3" y="354.00" font-family="Liberation Mono" font-size="11.550" xml:space="preserve"><tspan fill="#adb3b9">    }</tspan></text>
<text x="319" y="371.28" font-family="Liberation Mono" font-size="11.550" fill="#5c5f62" text-anchor="end">32</text>
<text x="319" y="388.56" font-family="Liberation Mono" font-size="11.550" fill="#5c5f62" text-anchor="end">33</text>
<text x="360.3" y="388.56" font-family="Liberation Mono" font-size="11.550" xml:space="preserve"><tspan fill="#adb3b9">    </tspan><tspan fill="#b27a4a">private </tspan><tspan fill="#adb3b9">View.OnClickListener </tspan><tspan fill="#9179a3">mOnEnterClickListener</tspan><tspan fill="#adb3b9"> = </tspan><tspan fill="#b27a4a">new </tspan><tspan fill="#adb3b9">View.OnClickListener() {</tspan></text>
<text x="319" y="405.84" font-family="Liberation Mono" font-size="11.550" fill="#5c5f62" text-anchor="end">34</text>
<text x="360.3" y="405.84" font-family="Liberation Mono" font-size="11.550" xml:space="preserve"><tspan fill="#adb3b9">        </tspan><tspan fill="#b0aa3a">@Override</tspan></text>
<text x="319" y="423.12" font-family="Liberation Mono" font-size="11.550" fill="#5c5f62" text-anchor="end">35</text>
<text x="360.3" y="423.12" font-family="Liberation Mono" font-size="11.550" xml:space="preserve"><tspan fill="#adb3b9">        </tspan><tspan fill="#b27a4a">public void </tspan><tspan fill="#e9bd6c">onClick</tspan><tspan fill="#adb3b9">(View view) {</tspan></text>
<text x="319" y="440.40" font-family="Liberation Mono" font-size="11.550" fill="#5c5f62" text-anchor="end">36</text>
<text x="360.3" y="440.40" font-family="Liberation Mono" font-size="11.550" xml:space="preserve"><tspan fill="#adb3b9">            </tspan><tspan fill="#b27a4a">if </tspan><tspan fill="#adb3b9">(isEmailValid() &amp;&amp; isPasswordValid()) {</tspan></text>
<text x="319" y="457.68" font-family="Liberation Mono" font-size="11.550" fill="#5c5f62" text-anchor="end">37</text>
<text x="360.3" y="457.68" font-family="Liberation Mono" font-size="11.550" xml:space="preserve"><tspan fill="#adb3b9">                </tspan><tspan fill="#adb3b9">Intent startProfileIntent =</tspan></text>
<text x="319" y="474.96" font-family="Liberation Mono" font-size="11.550" fill="#5c5f62" text-anchor="end">38</text>
<text x="360.3" y="474.96" font-family="Liberation Mono" font-size="11.550" xml:space="preserve"><tspan fill="#adb3b9">                        </tspan><tspan fill="#b27a4a">new </tspan><tspan fill="#adb3b9">Intent(getActivity()</tspan><tspan fill="#b27a4a">, </tspan><tspan fill="#adb3b9">ProfileActivity.</tspan><tspan fill="#b27a4a">class</tspan><tspan fill="#adb3b9">)</tspan><tspan fill="#b27a4a">;</tspan></text>
<text x="319" y="492.24" font-family="Liberation Mono" font-size="11.550" fill="#5c5f62" text-anchor="end">39</text>
<text x="360.3" y="492.24" font-family="Liberation Mono" font-size="11.550" xml:space="preserve"><tspan fill="#adb3b9">                </tspan><tspan fill="#adb3b9">startProfileIntent.putExtra(ProfileActivity.</tspan><tspan fill="#9179a3" font-style="italic">USER_KEY</tspan><tspan fill="#b27a4a">,</tspan></text>
<text x="319" y="509.52" font-family="Liberation Mono" font-size="11.550" fill="#5c5f62" text-anchor="end">40</text>
<text x="360.3" y="509.52" font-family="Liberation Mono" font-size="11.550" xml:space="preserve"><tspan fill="#adb3b9">                        </tspan><tspan fill="#b27a4a">new </tspan><tspan fill="#adb3b9">User(</tspan><tspan fill="#9179a3">mLogin</tspan><tspan fill="#adb3b9">.getText().toString()</tspan><tspan fill="#b27a4a">, </tspan><tspan fill="#9179a3">mPassword</tspan><tspan fill="#adb3b9">.getText().toString()))</tspan><tspan fill="#b27a4a">;</tspan></text>
<text x="319" y="526.80" font-family="Liberation Mono" font-size="11.550" fill="#5c5f62" text-anchor="end">41</text>
<text x="360.3" y="526.80" font-family="Liberation Mono" font-size="11.550" xml:space="preserve"><tspan fill="#adb3b9">                </tspan><tspan fill="#adb3b9">startActivity(startProfileIntent)</tspan><tspan fill="#b27a4a">;</tspan></text>
<text x="319" y="544.08" font-family="Liberation Mono" font-size="11.550" fill="#5c5f62" text-anchor="end">42</text>
<text x="360.3" y="544.08" font-family="Liberation Mono" font-size="11.550" xml:space="preserve"><tspan fill="#adb3b9">                </tspan><tspan fill="#adb3b9">getActivity().finish()</tspan><tspan fill="#b27a4a">;</tspan></text>
<text x="319" y="561.36" font-family="Liberation Mono" font-size="11.550" fill="#5c5f62" text-anchor="end">43</text>
<text x="360.3" y="561.36" font-family="Liberation Mono" font-size="11.550" xml:space="preserve"><tspan fill="#adb3b9">            } </tspan><tspan fill="#b27a4a">else </tspan><tspan fill="#adb3b9">{</tspan></text>
<text x="319" y="578.64" font-family="Liberation Mono" font-size="11.550" fill="#5c5f62" text-anchor="end">44</text>
<text x="360.3" y="578.64" font-family="Liberation Mono" font-size="11.550" xml:space="preserve"><tspan fill="#adb3b9">                </tspan><tspan fill="#adb3b9">showMessage(R.string.</tspan><tspan fill="#9179a3" font-style="italic">input_error</tspan><tspan fill="#adb3b9">)</tspan><tspan fill="#b27a4a">;</tspan></text>
<text x="319" y="595.92" font-family="Liberation Mono" font-size="11.550" fill="#5c5f62" text-anchor="end">45</text>
<text x="360.3" y="595.92" font-family="Liberation Mono" font-size="11.550" xml:space="preserve"><tspan fill="#adb3b9">            }</tspan></text>
<text x="319" y="613.20" font-family="Liberation Mono" font-size="11.550" fill="#5c5f62" text-anchor="end">46</text>
<text x="360.3" y="613.20" font-family="Liberation Mono" font-size="11.550" xml:space="preserve"><tspan fill="#adb3b9">        }</tspan></text>
<text x="319" y="630.48" font-family="Liberation Mono" font-size="11.550" fill="#5c5f62" text-anchor="end">47</text>
<text x="360.3" y="630.48" font-family="Liberation Mono" font-size="11.550" xml:space="preserve"><tspan fill="#adb3b9">    }</tspan><tspan fill="#b27a4a">;</tspan></text>
<path d="M609.8 218.3 L611.3 219.3 L612.8 218.3 L614.3 219.3 L615.8 218.3 L617.3 219.3 L618.8 218.3 L620.3 219.3 L621.8 218.3 L623.3 219.3 L624.8 218.3 L626.3 219.3 L627.8 218.3 L629.3 219.3 L630.8 218.3 L632.3 219.3 L633.8 218.3 L635.3 219.3 L636.8 218.3 L638.3 219.3 L639.8 218.3 L641.3 219.3 L642.8 218.3 L644.3 219.3 L645.8 218.3 L647.3 219.3 L648.8 218.3 L650.3 219.3 L651.8 218.3 L653.3 219.3 L654.8 218.3 L656.3 219.3 L657.8 218.3 L659.3 219.3 L660.8 218.3 L662.3 219.3 L663.8 218.3 L665.3 219.3 L666.8 218.3 L668.3 219.3 L669.8 218.3 L671.3 219.3 L672.8 218.3 L674.3 219.3 L675.8 218.3 L677.3 219.3 L678.8 218.3 L680.3 219.3 L681.8 218.3 L683.3 219.3 L684.8 218.3 L686.3 219.3 L687.8 218.3 L689.3 219.3 L690.8 218.3 L692.3 219.3 L693.8 218.3 L695.3 219.3 L696.8 218.3 L698.3 219.3 L699.8 218.3 L701.3 219.3 L702.8 218.3 L704.3 219.3 L705.8 218.3 L707.3 219.3 L708.8 218.3 L710.3 219.3 L711.8 218.3 L713.3 219.3 L714.8 218.3 L716.3 219.3 L717.8 218.3 L719.3 219.3 L720.8 218.3 L722.3 219.3 L723.8 218.3 L725.3 219.3 L726.8 218.3 L728.3 219.3 L729.8 218.3 L731.3 219.3 L732.8 218.3 L734.3 219.3 L735.8 218.3 L737.3 219.3 L738.8 218.3 L740.3 219.3 L741.8 218.3 L743.3 219.3 L744.8 218.3 L746.3 219.3 L747.8 218.3 L749.3 219.3 L750.8 218.3 L752.3 219.3 L753.8 218.3 L755.3 219.3 L756.8 218.3 L758.3 219.3 L759.8 218.3 L761.3 219.3 L762.8 218.3 L764.3 219.3 L765.8 218.3 L767.3 219.3 L768.8 218.3 L770.3 219.3 L771.8 218.3 L773.3 219.3 L774.8 218.3 L776.3 219.3" stroke="#6a6a6a" stroke-width="0.8" fill="none"/>
<line x1="783.53" y1="202.56" x2="783.53" y2="217.84" stroke="#bbbbbb" stroke-width="1" />
<rect x="357" y="144.2" width="90" height="19.5" fill="#5c5d4b" />
<text x="361" y="158" font-family="Liberation Mono" font-size="11.550" fill="#b8b9a8">AuthFragment</text>
<line x1="0" y1="639.6" x2="1024" y2="639.6" stroke="#1f1f1f" stroke-width="1" />
</svg></body></html>
